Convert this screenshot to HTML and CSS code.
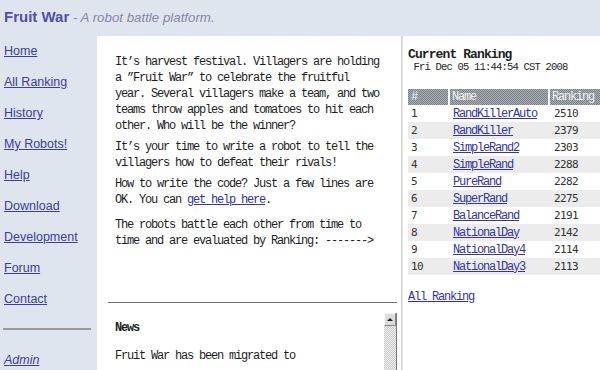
FILE: index.html
```html
<!DOCTYPE html>
<html>
<head>
<meta charset="utf-8">
<title>Fruit War</title>
<link rel="stylesheet" href="styles.css">
</head>
<body>
<div class="header">
  <span class="title">Fruit War</span><span class="subtitle"> - A robot battle platform.</span>
</div>
<div class="layout">
  <nav class="sidebar">
    <a href="#">Home</a>
    <a href="#">All Ranking</a>
    <a href="#">History</a>
    <a href="#">My Robots!</a>
    <a href="#">Help</a>
    <a href="#">Download</a>
    <a href="#">Development</a>
    <a href="#">Forum</a>
    <a href="#">Contact</a>
    <hr class="side-rule">
    <a href="#" class="admin">Admin</a>
  </nav>
  <main class="main">
    <div class="intro">
      <p>It’s harvest festival. Villagers are holding a ”Fruit War” to celebrate the fruitful year. Several villagers make a team, and two teams throw apples and tomatoes to hit each other. Who will be the winner?</p>
      <p>It’s your time to write a robot to tell the villagers how to defeat their rivals!</p>
      <p class="help">How to write the code? Just a few lines are OK. You can <a href="#">get help here</a>.</p>
      <p>The robots battle each other from time to time and are evaluated by Ranking: -------&gt;</p>
    </div>
    <hr class="main-rule">
    <div class="news">
      <div class="news-body">
        <h3>News</h3>
        <p>Fruit War has been migrated to</p>
      </div>
      <div class="scrollbar">
        <div class="scroll-up"><span class="arrow"></span></div>
        <div class="scroll-track"></div>
      </div>
    </div>
  </main>
  <aside class="ranking">
    <h2>Current Ranking</h2>
    <div class="date"> Fri Dec 05 11:44:54 CST 2008</div>
    <table class="rank-table">
      <thead>
        <tr><th class="c-num">#</th><th class="c-name">Name</th><th class="c-score">Ranking</th></tr>
      </thead>
      <tbody>
        <tr><td>1</td><td class="name"><a href="#">RandKillerAuto</a></td><td class="score">2510</td></tr>
        <tr><td>2</td><td class="name"><a href="#">RandKiller</a></td><td class="score">2379</td></tr>
        <tr><td>3</td><td class="name"><a href="#">SimpleRand2</a></td><td class="score">2303</td></tr>
        <tr><td>4</td><td class="name"><a href="#">SimpleRand</a></td><td class="score">2288</td></tr>
        <tr><td>5</td><td class="name"><a href="#">PureRand</a></td><td class="score">2282</td></tr>
        <tr><td>6</td><td class="name"><a href="#">SuperRand</a></td><td class="score">2275</td></tr>
        <tr><td>7</td><td class="name"><a href="#">BalanceRand</a></td><td class="score">2191</td></tr>
        <tr><td>8</td><td class="name"><a href="#">NationalDay</a></td><td class="score">2142</td></tr>
        <tr><td>9</td><td class="name"><a href="#">NationalDay4</a></td><td class="score">2114</td></tr>
        <tr><td>10</td><td class="name"><a href="#">NationalDay3</a></td><td class="score">2113</td></tr>
      </tbody>
    </table>
    <a href="#" class="all-link">All Ranking</a>
  </aside>
</div>
</body>
</html>
```
FILE: styles.css
```css
html, body {
  margin: 0;
  padding: 0;
}
body {
  width: 600px;
  height: 370px;
  overflow: hidden;
  background: #dfe5ee;
  font-family: "Liberation Sans", Arial, sans-serif;
}
.header {
  height: 36px;
  box-sizing: border-box;
  padding: 8px 0 0 4px;
  line-height: 18px;
  white-space: nowrap;
}
.title {
  font-size: 15px;
  font-weight: bold;
  color: #5050aa;
}
.subtitle {
  font-size: 13.3px;
  font-style: italic;
  color: #8686a8;
}
.layout {
  display: flex;
  height: 334px;
}
.sidebar {
  width: 97px;
  flex: none;
  box-sizing: border-box;
  padding: 8px 0 0 4px;
  display: flex;
  flex-direction: column;
  align-items: flex-start;
  gap: 16px;
}
.sidebar a {
  font-size: 12.5px;
  line-height: 15px;
  color: #3d3d9c;
  text-decoration: underline;
}
.sidebar .admin {
  font-style: italic;
}
.side-rule {
  align-self: stretch;
  margin: 5px 6px 7px -1px;
  border: 0;
  height: 2px;
  background: #9a9a9a;
}
.main {
  width: 305px;
  flex: none;
  box-sizing: border-box;
  background: #fff;
  border-right: 1px solid #d6d6d6;
  padding: 0 4px 0 11px;
  display: flex;
  flex-direction: column;
}
.intro {
  height: 266px;
  flex: none;
  box-sizing: border-box;
  padding: 18px 17px 0 7px;
  font-family: "Liberation Mono", "Courier New", monospace;
  font-size: 12px;
  letter-spacing: -1.2px;
  line-height: 16px;
  color: #1e1e1e;
}
.intro p {
  margin: 0 0 5px;
}
.intro p.help {
  margin-bottom: 9px;
}
.intro a, .news a {
  color: #3333aa;
}
.main-rule {
  margin: 0;
  border: 0;
  height: 1px;
  background: #707070;
  flex: none;
}
.news {
  margin-top: 10px;
  height: 100px;
  flex: none;
  display: flex;
}
.news-body {
  flex: 1;
  padding: 7px 7px 0;
  font-family: "Liberation Mono", "Courier New", monospace;
  font-size: 12px;
  letter-spacing: -1.2px;
  line-height: 16px;
  color: #1e1e1e;
}
.news-body h3 {
  margin: 0 0 12px;
  font-size: 12px;
  font-weight: bold;
  line-height: 16px;
}
.news-body p {
  margin: 0;
}
.scrollbar {
  width: 12px;
  flex: none;
  display: flex;
  flex-direction: column;
  border-right: 1px solid #777;
}
.scroll-up {
  height: 13px;
  flex: none;
  box-sizing: border-box;
  background: #dcdcdc;
  border: 1px solid #f4f4f4;
  border-right-color: #888;
  border-bottom-color: #888;
  display: flex;
  align-items: center;
  justify-content: center;
}
.arrow {
  width: 0;
  height: 0;
  border-left: 3px solid transparent;
  border-right: 3px solid transparent;
  border-bottom: 3px solid #222;
}
.scroll-track {
  flex: 1;
  background: repeating-conic-gradient(#c8c8c8 0 25%, #f0f0f0 0 50%) 0 0 / 2px 2px;
}
.ranking {
  flex: 1;
  background: #fff;
  padding: 12px 0 0 5px;
  border-left: 1px solid #e2e2e2;
  font-family: "Liberation Mono", "Courier New", monospace;
  color: #1e1e1e;
}
.ranking h2 {
  margin: 0;
  font-size: 13px;
  line-height: 13px;
  letter-spacing: -0.9px;
  font-weight: bold;
}
.date {
  font-size: 10.5px;
  line-height: 13px;
  letter-spacing: -0.8px;
  white-space: pre;
}
.rank-table {
  margin-top: 15px;
  width: 192px;
  border-collapse: collapse;
  table-layout: fixed;
  font-size: 12px;
}
.rank-table th {
  height: 16px;
  padding: 0 0 0 2px;
  text-align: left;
  font-weight: normal;
  color: #f2f2f2;
  letter-spacing: -1.2px;
  background: repeating-conic-gradient(#7b8089 0 25%, #a9adb5 0 50%) 0 0 / 2px 2px;
  border-left: 2px solid #fff;
}
.rank-table th.c-num {
  border-left: 0;
  padding-left: 3px;
  width: 37px;
}
.rank-table th.c-name {
  width: 96px;
}
.rank-table td {
  height: 17px;
  padding: 0 0 0 3px;
  font-family: "DejaVu Sans Mono", monospace;
  font-size: 11px;
  letter-spacing: -0.6px;
  color: #333;
}
.rank-table td.name {
  padding-left: 4px;
}
.rank-table td.score {
  padding-left: 5px;
}
.rank-table td a {
  font-family: "Liberation Mono", "Courier New", monospace;
  font-size: 12px;
  letter-spacing: -1.2px;
  color: #3333aa;
}
.rank-table tbody tr:nth-child(even) td {
  background: #ececec;
}
.all-link {
  display: inline-block;
  margin-top: 15px;
  font-size: 12px;
  line-height: 15px;
  letter-spacing: -1.2px;
  color: #3333aa;
}
```
